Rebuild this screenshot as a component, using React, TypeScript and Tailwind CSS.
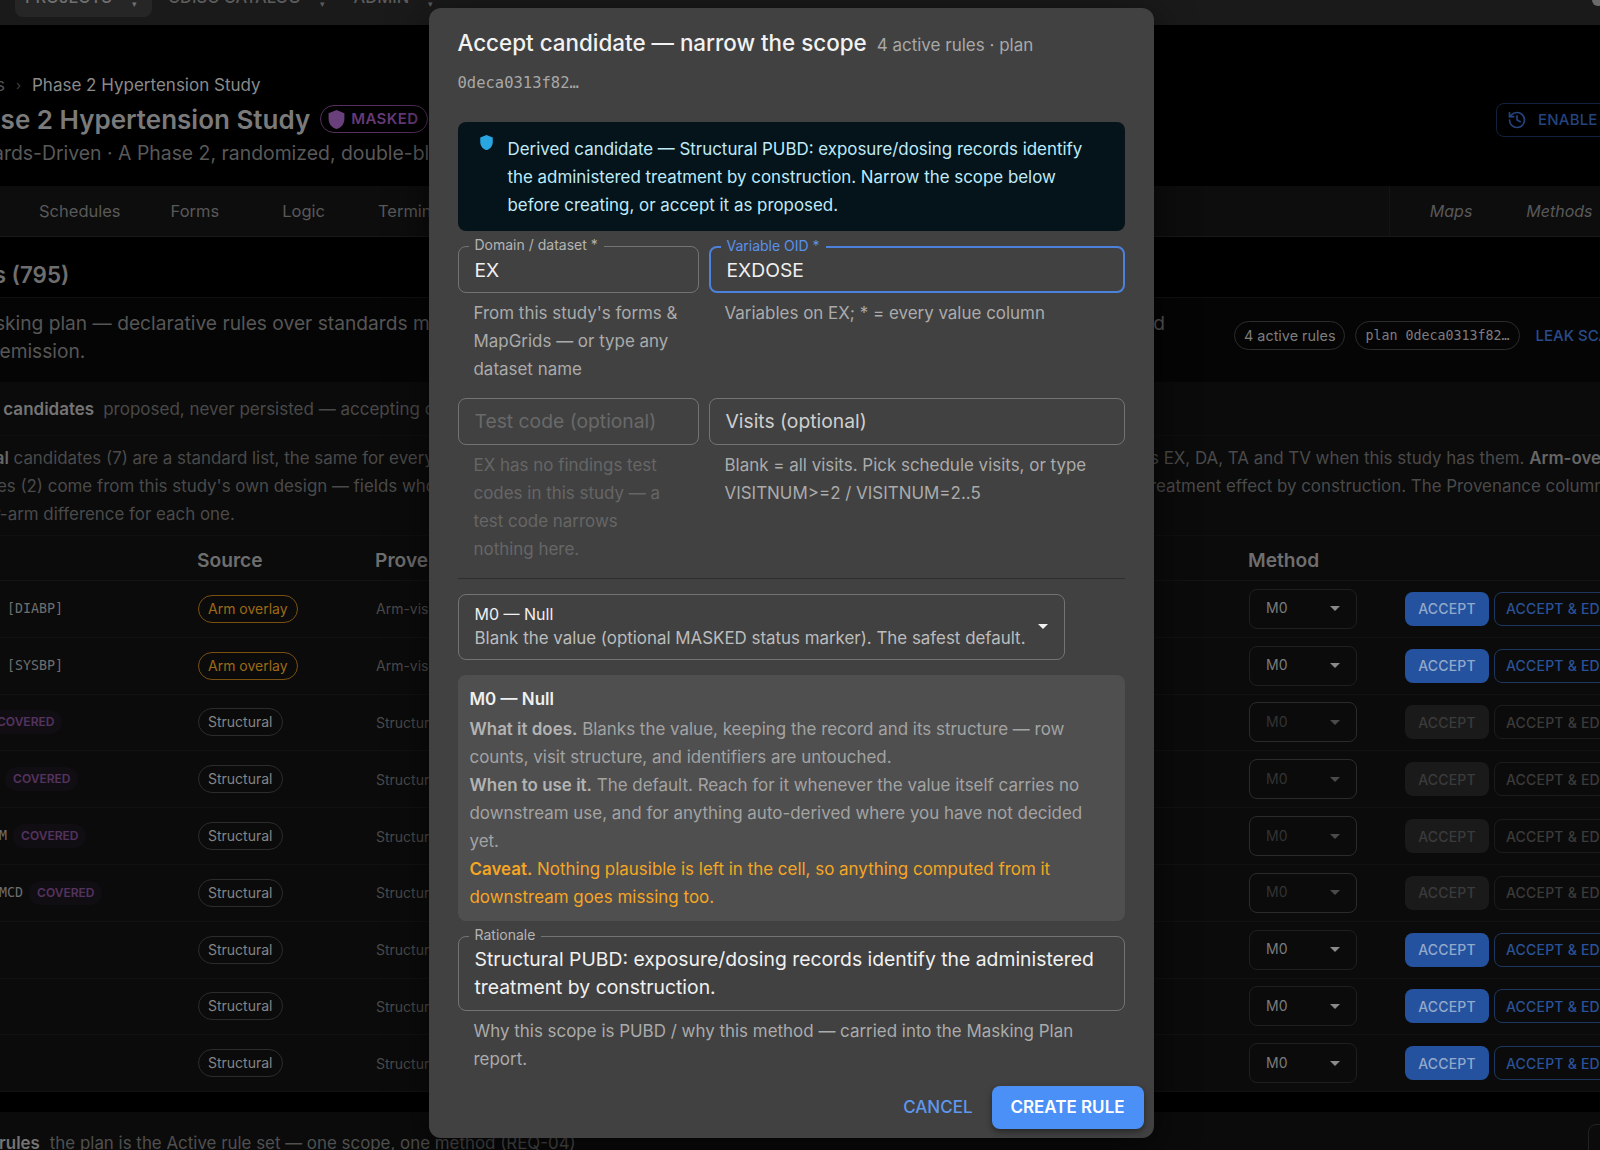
import { History } from "lucide-react";

const mono = "font-['DejaVu_Sans_Mono',monospace]";

type Row = { name: string; tag?: string; covered?: boolean; source: string; prov: string; off?: boolean };
const rows: Row[] = [
  { name: "VSORRES", tag: "[DIABP]", source: "Arm overlay", prov: "Arm-visible" },
  { name: "VSORRES", tag: "[SYSBP]", source: "Arm overlay", prov: "Arm-visible" },
  { name: "EXTRT", covered: true, source: "Structural", prov: "Structural", off: true },
  { name: "EXDOSEU", covered: true, source: "Structural", prov: "Structural", off: true },
  { name: "EXDOSFRM", covered: true, source: "Structural", prov: "Structural", off: true },
  { name: "EXDOSE_MCD", covered: true, source: "Structural", prov: "Structural", off: true },
  { name: "EXCAT", source: "Structural", prov: "Structural" },
  { name: "EXLOT", source: "Structural", prov: "Structural" },
  { name: "EXSEQ", source: "Structural", prov: "Structural" },
];

function Caret({ className }: { className: string }) {
  return (
    <svg width="10" height="5" viewBox="0 0 10 5" className={className}>
      <path d="M0 0h10L5 5z" fill="currentColor" />
    </svg>
  );
}

function TableRow({ r }: { r: Row }) {
  return (
    <div className="flex h-[56.8px] items-center border-b border-[#121212]">
      <div className={`${mono} flex w-[255px] shrink-0 items-center gap-[6px] whitespace-nowrap text-[13.3px] text-[#6e6e6e]`}>
        <span>{r.name}{r.tag ? ` ${r.tag}` : ""}</span>
        {r.covered && (
          <span className="rounded-full bg-[#110e13] px-[8px] py-[3px] font-['Inter',sans-serif] text-[12px] font-semibold text-[#55335f]">COVERED</span>
        )}
      </div>
      <div className="w-[178px] shrink-0">
        {r.source === "Arm overlay" ? (
          <span className="inline-block h-[28px] rounded-full border border-[#7a5010] px-[9px] text-[14px] leading-[26px] text-[#9c6a17]">Arm overlay</span>
        ) : (
          <span className="inline-block h-[28px] rounded-full border border-[#2c2c2c] px-[9px] text-[14px] leading-[26px] text-[#858585]">Structural</span>
        )}
      </div>
      <div className="w-[873px] shrink-0 whitespace-nowrap text-[14px] text-[#4a4a4a]">{r.prov}</div>
      <div className={`flex h-[40px] w-[108px] shrink-0 items-center justify-between rounded-lg border pl-[16px] pr-[16px] text-[14px] ${r.off ? "border-[#2b2b2b] text-[#333333]" : "border-[#1f1f1f] text-[#7c7c7c]"}`}>
        <span className="-mt-[2px]">M0</span>
        <Caret className={r.off ? "text-[#4a4a4a]" : "text-[#8a8a8a]"} />
      </div>
      <div className={`ml-[48px] flex h-[34px] w-[84px] shrink-0 items-center justify-center rounded-lg text-[14px] font-medium tracking-[0.2px] ${r.off ? "bg-[#1a1a1a] text-[#3b3b3b]" : "bg-[#24529e] text-[#93a9cb]"}`}>ACCEPT</div>
      <div className={`ml-[5px] flex h-[34px] w-[130px] shrink-0 items-center rounded-lg border pl-[11px] text-[14px] font-medium tracking-[0.2px] whitespace-nowrap ${r.off ? "border-[#1c1c1c] text-[#3b3b3b]" : "border-[#1d3760] text-[#2a5298]"}`}>ACCEPT &amp; EDIT</div>
    </div>
  );
}

function Field({ label, value, focused, muted, placeholder }: { label?: string; value: string; focused?: boolean; muted?: boolean; placeholder?: boolean }) {
  return (
    <div className={`relative flex h-[47px] items-center rounded-lg pl-[16px] text-[19.3px] ${focused ? "border-2 border-[#4c82dc] pl-[15px]" : "border border-[#737373]"} ${placeholder ? (muted ? "text-[#696969]" : "text-[#cfcfcf]") : "text-[#f0f0f0]"}`}>
      {label && (
        <span className={`absolute -top-[10px] left-[10px] bg-[#414141] px-[6px] text-[14px] leading-[16px] ${focused ? "text-[#5b90ea]" : "text-[#b4b4b4]"}`}>{label}</span>
      )}
      <span className={label ? "mt-[1px]" : ""}>{value}</span>
    </div>
  );
}

export default function App() {
  return (
    <div className="relative h-[1150px] w-[1600px] overflow-hidden bg-[#000000] font-['Inter',sans-serif]">
      <div className="-ml-[60px] w-[1800px]">
        {/* App bar */}
        <div className="flex h-[25px] items-end bg-[#1a1a1a] pb-[8px] pl-[75px] text-[16.5px] font-medium text-[#5c5c5c]">
          <div className="flex h-[30px] w-[137px] items-end rounded-lg bg-[#262626] pb-[7px] pl-[10px] text-[#707070]">PROJECTS<span className="ml-[20px] text-[9px]">▾</span></div>
          <div className="ml-[16px] flex h-[30px] items-end pb-[7px]">CDISC CATALOG<span className="ml-[19px] text-[9px]">▾</span></div>
          <div className="ml-[29px] flex h-[30px] items-end pb-[7px]">ADMIN<span className="ml-[19px] text-[9px]">▾</span></div>
        </div>

        {/* Study header */}
        <div className="relative h-[161px]">
          <div className="flex pt-[49px] pl-[4px] text-[17px] leading-[22px] text-[#8a8a8a] whitespace-nowrap">
            <span className="w-[61px] text-right text-[#555555]">Studies</span>
            <span className="w-[27px] text-center text-[13px] text-[#444444]">›</span>
            <span>Phase 2 Hypertension Study</span>
          </div>
          <div className="mt-[7px] flex h-[32px] items-center whitespace-nowrap pl-[13px]">
            <span className="text-[26px] font-semibold text-[#7a7a7a]">Phase 2 Hypertension Study</span>
            <span className="ml-[10px] flex h-[28px] w-[108px] items-center gap-[5px] rounded-full border border-[#55305f] pl-[6px] text-[15px] font-semibold tracking-[0.4px] text-[#663a78]">
              <svg width="19" height="21" viewBox="0 0 24 26"><path d="M12 1 2 5v7c0 6.500 4.200 11.500 10 13 5.800-1.500 10-6.500 10-13V5z" fill="#693f7c" /></svg>
              MASKED
            </span>
          </div>
          <div className="mt-[6px] text-[19.4px] leading-[24px] whitespace-nowrap text-[#595959]">Standards-Driven · A Phase 2, randomized, double-blind study of blood pressure response</div>
          <div className="absolute left-[1556px] top-[78px] flex h-[34px] w-[240px] items-center gap-[11px] rounded-lg border border-[#12223e] pl-[10px] text-[15px] font-medium tracking-[0.2px] text-[#24447f]">
            <History size={20} strokeWidth={2} />
            ENABLE TRIAL VIEW
          </div>
        </div>

        {/* Tabs */}
        <div className="flex h-[51px] items-center border-b border-[#181818] bg-[#0d0d0d] text-[16.5px] text-[#595959]">
          <span className="ml-[99px]">Schedules</span>
          <span className="ml-[50px]">Forms</span>
          <span className="ml-[63px]">Logic</span>
          <span className="ml-[53px]">Terminology</span>
          <div className="ml-[914px] h-full w-px bg-[#141414]" />
          <span className="ml-[40px] text-[16px] italic">Maps</span>
          <span className="ml-[54px] text-[16px] italic">Methods</span>
        </div>

        {/* Section title */}
        <div className="flex h-[61px] items-center whitespace-nowrap border-b border-[#101010] pt-[16px] text-[22.4px] font-semibold text-[#6e6e6e]">
          <span className="ml-[-57px]">Candidates (795)</span>
        </div>

        {/* Plan strip */}
        <div className="relative h-[84px] bg-[#050505] pt-[11px] text-[19.2px] leading-[28px] text-[#565656]">
          <div className="flex w-[1225px] justify-between whitespace-nowrap">
            <span className="ml-[-13px]">The masking plan — declarative rules over standards metadata</span>
            <span>recorded</span>
          </div>
          <div className="whitespace-nowrap"><span className="ml-[-5px]">before emission.</span></div>
          <div className="absolute left-[1294px] top-[23px] flex items-center gap-[10px] whitespace-nowrap text-[14.4px]">
            <span className="flex h-[29px] items-center rounded-full border border-[#2c2c2c] px-[9px] text-[#7d7d7d]">4 active rules</span>
            <span className={`${mono} flex h-[29px] items-center rounded-full border border-[#2c2c2c] px-[9px] text-[13.3px] text-[#7d7d7d]`}>plan 0deca0313f82…</span>
            <span className="ml-[6px] text-[15px] font-medium text-[#2a4c8c]">LEAK SCAN</span>
          </div>
        </div>

        {/* Candidates */}
        <div className="bg-[#0b0b0b]">
          <div className="flex h-[54px] items-center gap-[9px] whitespace-nowrap border-b border-[#0f0f0f] pt-[2px] text-[17px]">
            <span className="font-semibold text-[#747474]"><span className="ml-[-5px]">Derived candidates</span></span>
            <span className="text-[#494949]">proposed, never persisted — accepting creates a rule</span>
          </div>
          <div className="h-[100px] border-b border-[#101010] pt-[8px] text-[16.9px] leading-[28px] whitespace-nowrap text-[#4a4a4a]">
            <div className="relative h-[28px]">
              <span className="ml-[-12px]"><b className="font-semibold text-[#666666]">Structural</b> candidates (7) are a standard list, the same for every study</span>
              <span className="absolute left-[1210px] top-0">s EX, DA, TA and TV when this study has them. <b className="font-semibold text-[#666666]">Arm-overlay</b></span>
            </div>
            <div className="relative h-[28px]">
              <span className="ml-[-12px]">candidates (2) come from this study's own design — fields whose values differ</span>
              <span className="absolute left-[1210px] top-0">reatment effect by construction. The Provenance column</span>
            </div>
            <div className="h-[28px]"><span className="ml-[-49px]">states the per-arm difference for each one.</span></div>
          </div>
          <div className="flex h-[45px] items-center border-b border-[#131313] pt-[5px] text-[19.2px] font-semibold text-[#6e6e6e]">
            <span className="w-[257px]" />
            <span className="w-[178px]">Source</span>
            <span className="w-[873px] whitespace-nowrap">Provenance</span>
            <span>Method</span>
          </div>
          <div className="pl-[3px]">
            {rows.map((r, i) => <TableRow key={i} r={r} />)}
          </div>
        </div>

        <div className="h-[20px] bg-[#000000]" />

        {/* Active rules */}
        <div className="relative h-[40px] bg-[#0b0b0b] pt-[20px] whitespace-nowrap text-[16.9px] leading-[22px] text-[#505050]">
          <b className="ml-[3px] font-semibold text-[#747474]">Active rules</b>
          <span className="ml-[10px]">the plan is the Active rule set — one scope, one method (REQ-04)</span>
          <div className="absolute left-[1648px] top-[12px] h-[40px] w-[100px] rounded-lg border border-[#222222]" />
        </div>
      </div>

      {/* Account avatar, cut by the top edge */}
      <div className="absolute -top-[6px] left-[1592px] h-[12px] w-[12px] rounded-full bg-[#6a6a6a]" />

      {/* Modal */}
      <div className="absolute left-[429px] top-[8px] flex h-[1130px] w-[725px] flex-col rounded-xl bg-[#414141] pl-[28.5px] pr-[29.5px] pt-[17px] shadow-[0_10px_40px_rgba(0,0,0,0.6)]">
        <div className="flex h-[36px] items-end gap-[10px] whitespace-nowrap pb-[1px]">
          <span className="text-[22.4px] font-medium leading-[34px] text-[#f2f2f2]">Accept candidate — narrow the scope</span>
          <span className="pb-[2px] text-[17px] leading-[26px] text-[#a8a8a8]">4 active rules · plan</span>
        </div>
        <div className={`${mono} mt-[10px] h-[24px] text-[15.5px] leading-[24px] text-[#a8a8a8]`}>0deca0313f82…</div>
        <div className="mt-[27px] flex h-[109px] rounded-lg bg-[#05141b] text-[16.9px] leading-[28px] text-[#bfeaf8]">
          <svg width="15" height="17" viewBox="0 0 24 26" className="ml-[21px] mt-[12px] shrink-0"><path d="M12 1 2 5v7c0 6.500 4.200 11.500 10 13 5.800-1.500 10-6.500 10-13V5z" fill="#29a6e2" /></svg>
          <div className="ml-[14px] pt-[13px]">Derived candidate — Structural PUBD: exposure/dosing records identify<br />the administered treatment by construction. Narrow the scope below<br />before creating, or accept it as proposed.</div>
        </div>

        <div className="mt-[15px] grid grid-cols-[241px_416px] gap-x-[10px]">
          <Field label="Domain / dataset *" value="EX" />
          <Field label="Variable OID *" value="EXDOSE" focused />
          <div className="h-[105px] px-[16px] pt-[6px] text-[16.95px] leading-[28px] text-[#ababab]">From this study's forms &amp; MapGrids — or type any dataset name</div>
          <div className="h-[105px] px-[16px] pt-[6px] text-[16.95px] leading-[28px] text-[#ababab]">Variables on EX; * = every value column</div>
          <Field value="Test code (optional)" placeholder muted />
          <Field value="Visits (optional)" placeholder />
          <div className="h-[133px] px-[16px] pt-[6px] text-[16.95px] leading-[28px] text-[#666666]">EX has no findings test codes in this study — a test code narrows nothing here.</div>
          <div className="h-[133px] px-[16px] pt-[6px] text-[16.95px] leading-[28px] text-[#ababab]">Blank = all visits. Pick schedule visits, or type VISITNUM&gt;=2 / VISITNUM=2..5</div>
        </div>
        <div className="h-px w-[667px] shrink-0 bg-[#2e2e2e]" />

        <div className="relative mt-[15px] h-[66px] w-[607px] shrink-0 rounded-lg border border-[#737373] pl-[16px] pt-[7px] text-[16.9px] leading-[24px]">
          <div className="text-[16px] text-[#f0f0f0]">M0 — Null</div>
          <div className="whitespace-nowrap text-[#bcbcbc]">Blank the value (optional MASKED status marker). The safest default.</div>
          <Caret className="absolute left-[579px] top-[29px] text-[#f2f2f2]" />
        </div>

        <div className="mt-[15px] h-[246px] w-[667px] shrink-0 rounded-lg bg-[#4f4f4f] px-[12px] pt-[10px] text-[16.95px] leading-[28px] text-[#a3a3a3]">
          <div className="font-semibold text-[#efefef]">M0 — Null</div>
          <div className="mt-[2px]"><b className="font-semibold text-[#b3b3b3]">What it does.</b> Blanks the value, keeping the record and its structure — row counts, visit structure, and identifiers are untouched.</div>
          <div><b className="font-semibold text-[#b3b3b3]">When to use it.</b> The default. Reach for it whenever the value itself carries no downstream use, and for anything auto-derived where you have not decided yet.</div>
          <div className="text-[#f5a623]"><b className="font-semibold">Caveat.</b> Nothing plausible is left in the cell, so anything computed from it downstream goes missing too.</div>
        </div>

        <div className="relative mt-[15px] h-[75px] w-[667px] shrink-0 rounded-lg border border-[#737373] px-[16px] pt-[8px] text-[19.35px] leading-[28px] text-[#f0f0f0]">
          <span className="absolute -top-[10px] left-[10px] bg-[#414141] px-[6px] text-[14px] leading-[16px] text-[#b4b4b4]">Rationale</span>
          Structural PUBD: exposure/dosing records identify the administered treatment by construction.
        </div>
        <div className="w-[667px] px-[16px] pt-[6px] text-[16.95px] leading-[28px] text-[#ababab]">Why this scope is PUBD / why this method — carried into the Masking Plan report.</div>

        <div className="mt-[13px] -mr-[19px] flex items-center justify-end gap-[19px]">
          <span className="text-[17px] font-medium text-[#5e98ee]">CANCEL</span>
          <span className="flex h-[43px] w-[152px] items-center justify-center rounded-lg bg-[#4a90f7] text-[17px] font-semibold text-white shadow-[0_3px_6px_rgba(0,0,0,0.4)]">CREATE RULE</span>
        </div>
      </div>
    </div>
  );
}
